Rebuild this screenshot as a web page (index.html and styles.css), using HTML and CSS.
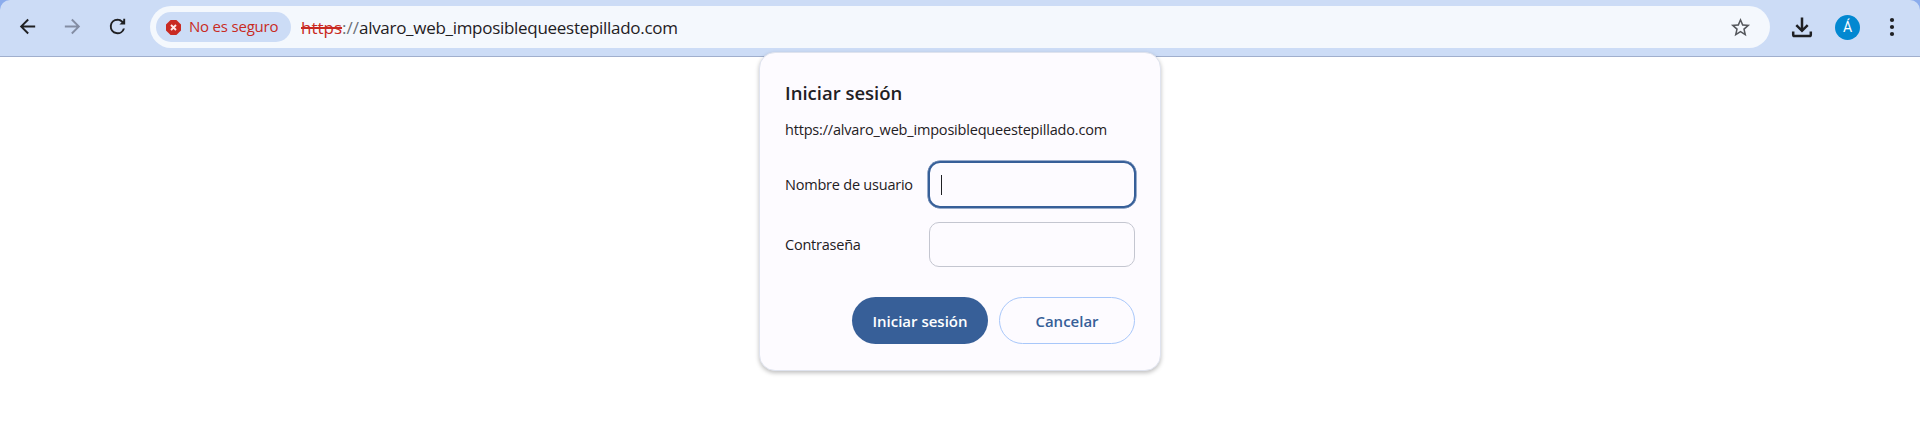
FILE: index.html
```html
<!DOCTYPE html>
<html lang="es">
<head>
<meta charset="utf-8">
<title>Iniciar sesión</title>
<link rel="stylesheet" href="styles.css">
</head>
<body>
<div class="frame">
<header class="toolbar">
  <nav class="nav">
    <svg class="nav-icon" viewBox="0 0 24 24"><path d="M20 11H7.83l5.59-5.59L12 4l-8 8 8 8 1.41-1.41L7.83 13H20z"/></svg>
    <svg class="nav-icon nav-icon-off" viewBox="0 0 24 24"><path d="M4 11h12.17l-5.59-5.59L12 4l8 8-8 8-1.41-1.41L16.17 13H4z"/></svg>
    <svg class="nav-icon" viewBox="0 0 24 24"><path d="M17.65 6.35A7.96 7.96 0 0 0 12 4a8 8 0 1 0 7.73 10h-2.08A6 6 0 1 1 12 6c1.66 0 3.14.69 4.22 1.78L14 10h6V4h-2v2.1z"/></svg>
  </nav>
  <div class="omnibox">
    <span class="chip">
      <svg class="chip-icon" viewBox="0 0 15 15"><path fill="#c92a22" d="M4.6 0h5.8L15 4.6v5.8L10.4 15H4.6L0 10.4V4.6z"/><path d="M5 5l5 5M10 5l-5 5" stroke="#ffe9e9" stroke-width="1.9"/></svg>
      <span class="chip-text">No es seguro</span>
    </span>
    <span class="url"><span class="scheme">https</span><span class="slashes">://</span><span class="domain">alvaro_web_imposiblequeestepillado.com</span></span>
    <svg class="star" viewBox="0 0 24 24"><path d="M22 9.24l-7.19-.62L12 2 9.19 8.63 2 9.24l5.46 4.73L5.82 21 12 17.27 18.18 21l-1.63-7.03zM12 15.4l-3.76 2.27 1-4.28-3.32-2.88 4.38-.38L12 6.1l1.71 4.04 4.38.38-3.32 2.88 1 4.28z"/></svg>
  </div>
  <div class="actions">
    <svg class="download" viewBox="0 0 22 21" fill="none" stroke="#1f2023" stroke-width="2.5"><path d="M11 .5v13M5.3 8.2L11 13.8l5.7-5.6M2.2 14.5v3.2q0 1.3 1.3 1.3h15q1.3 0 1.3-1.3v-3.2"/></svg>
    <span class="avatar">Á</span>
    <svg class="dots" viewBox="0 0 6 20"><circle cx="3" cy="3" r="2.1"/><circle cx="3" cy="10" r="2.1"/><circle cx="3" cy="17" r="2.1"/></svg>
  </div>
</header>
</div>
<form class="dialog">
  <h1 class="title">Iniciar sesión</h1>
  <p class="origin">https://alvaro_web_imposiblequeestepillado.com</p>
  <div class="row">
    <span class="label">Nombre de usuario</span>
    <div class="field field-focus"><span class="caret"></span></div>
  </div>
  <div class="row">
    <span class="label">Contraseña</span>
    <div class="field"></div>
  </div>
  <div class="buttons">
    <button type="button" class="btn btn-primary">Iniciar sesión</button>
    <button type="button" class="btn btn-secondary">Cancelar</button>
  </div>
</form>
</body>
</html>
```
FILE: styles.css
```css
* { box-sizing: border-box; }
body {
  margin: 0;
  height: 437px;
  overflow: hidden;
  background: #fff;
  color: #1f2023;
  font-family: "Open Sans", "Noto Sans", sans-serif;
}
.frame { background: linear-gradient(#8bacec 12px, #fff 12px); }
.toolbar {
  display: flex;
  align-items: flex-start;
  height: 57px;
  padding: 6px 24px 0 16px;
  background: #ccdcf6;
  border-bottom: 1px solid #a0afcd;
  border-radius: 10px 10px 0 0;
}
.nav { display: flex; gap: 22px; width: 134px; padding-top: 9px; }
.nav-icon { flex: none; width: 23px; height: 23px; fill: #1f2023; }
.nav-icon-off { fill: #838da3; }
.omnibox {
  display: flex;
  align-items: center;
  width: 1620px;
  height: 42px;
  padding: 0 18px 0 6px;
  background: #f4f8fd;
  border-radius: 21px;
}
.chip {
  display: flex;
  align-items: center;
  width: 135px;
  height: 30px;
  padding-left: 10px;
  gap: 8px;
  background: #ccdcf6;
  border-radius: 15px;
  color: #c92a22;
  font-size: 15px;
  line-height: 28px;
  white-space: nowrap;
}
.chip-icon { flex: none; width: 15px; height: 15px; }
.chip-text { margin-top: -2px; letter-spacing: -0.2px; }
.url {
  margin-left: 10px;
  font-size: 17px;
  white-space: nowrap;
}
.scheme { color: #c92a22; text-decoration: line-through 2px; }
.slashes { color: #6b6f76; }
.domain { letter-spacing: -0.29px; }
.star { width: 23px; height: 23px; margin-left: auto; fill: #55585d; }
.actions { display: flex; align-items: center; height: 42px; padding-left: 21px; }
.download { width: 22px; height: 21px; }
.avatar {
  width: 25px;
  height: 25px;
  margin-left: 22px;
  border-radius: 50%;
  background: #0288d1;
  color: #fff;
  font: 14px/25px Roboto, sans-serif;
  text-align: center;
}
.dots { width: 6px; height: 20px; margin-left: 29px; fill: #1f2023; }
.dialog {
  position: absolute;
  top: 52px;
  left: 759px;
  width: 402px;
  height: 319px;
  padding: 25px 25px 0;
  background: #fdfbff;
  border: 1px solid #dfe3ee;
  border-radius: 16px;
  box-shadow: 0 2px 4px rgba(0, 0, 0, .25);
  white-space: nowrap;
}
.title { margin: 0; font-size: 18.5px; line-height: 30px; font-weight: 600; }
.origin { margin: 12px 0 21px; font-size: 14.5px; line-height: 20px; letter-spacing: -0.19px; }
.row { display: flex; align-items: center; justify-content: space-between; height: 47px; margin-bottom: 13px; }
.label { font-size: 14.5px; letter-spacing: -0.22px; }
.field {
  width: 206px;
  height: 45px;
  border: 1px solid #c4c6d0;
  border-radius: 10px;
}
.field-focus {
  display: flex;
  align-items: center;
  width: 208px;
  height: 47px;
  margin-right: -1px;
  padding-left: 11px;
  border: 2px solid #375f98;
  border-radius: 12px;
  box-shadow: 0 0 0 .5px #375f98;
}
.caret { width: 1px; height: 20px; background: #1f2023; }
.buttons { display: flex; justify-content: flex-end; gap: 11px; margin-top: 29px; }
.btn {
  width: 136px;
  height: 47px;
  padding: 0;
  border: 0;
  border-radius: 24px;
  font: 600 15px "Open Sans", "Noto Sans", sans-serif;
}
.btn-primary { background: #375f98; color: #fff; }
.btn-secondary { background: transparent; color: #375f98; border: 1px solid #a8c7fa; }
```
